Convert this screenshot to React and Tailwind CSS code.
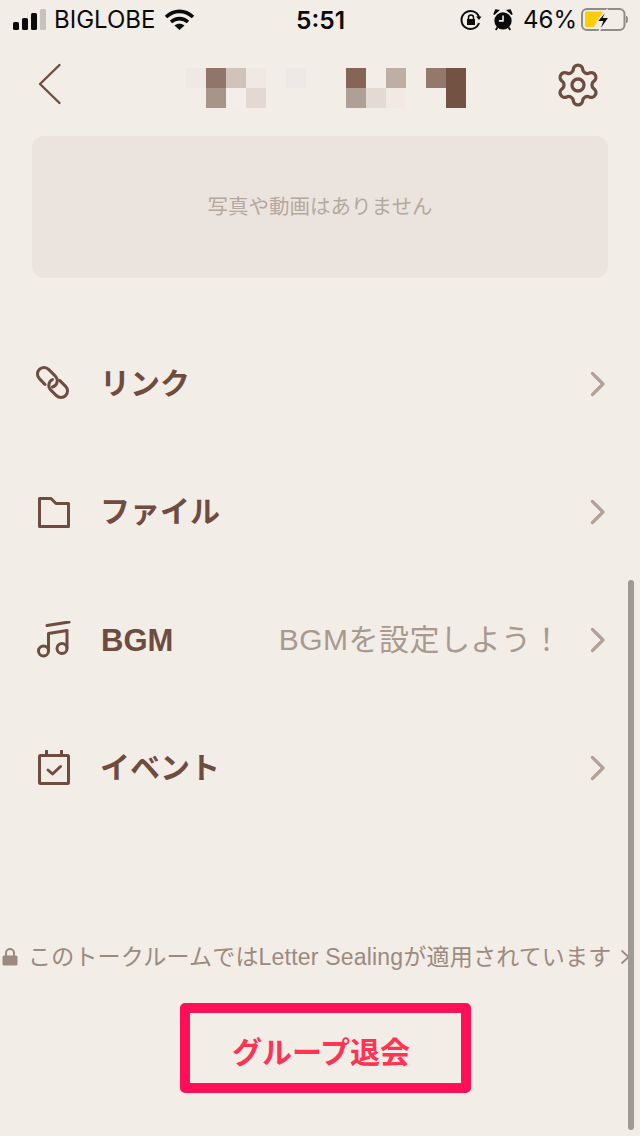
const JP = { fontFamily: '"Liberation Sans","Noto Sans CJK JP",sans-serif' };
const STATUS = { fontFamily: '"Inter","Liberation Sans",sans-serif' };

const MOSAIC = [
  ["#efe9e3","#90756a","#cfc3ba","#f0e8e2",null,"#efe9e5",null,null,"#846557","#f3ede8","#bfaea3",null,"#94786b","#745243"],
  [null,"#a89488","#f3eee9","#e2dad2",null,null,null,null,"#b09f94","#e3dad4","#f2e9e3",null,null,"#745243"],
];

function Chevron({ className = "" }) {
  return (
    <svg width="16" height="26" viewBox="0 0 16 26" fill="none" className={className}>
      <path d="M2.5 2.5 13 13 2.5 23.5" stroke="#b3a097" strokeWidth="3.2" strokeLinecap="round" strokeLinejoin="round" />
    </svg>
  );
}

function LinkIcon() {
  return (
    <svg width="36" height="36" viewBox="0 0 36 36" fill="none" stroke="#6e4c3f" strokeWidth="3" strokeLinecap="round" strokeLinejoin="round">
      <path d="M9 18.500 3.400 12.600A6.500 6.500 0 0 1 12.600 3.400L19.600 10.400A6.500 6.500 0 0 1 16.500 21" />
      <path d="M23.600 14.400 29.600 20.400A6.500 6.500 0 0 1 20.400 29.600L14.400 23.600A6.500 6.500 0 0 1 16.500 13.500" />
    </svg>
  );
}
function FolderIcon() {
  return (
    <svg width="36" height="36" viewBox="0 0 36 36" fill="none" stroke="#6e4c3f" strokeWidth="3" strokeLinejoin="round">
      <path d="M3.5 4.5H15L20 9.5H32.5V32.5H3.5Z" />
    </svg>
  );
}
function MusicIcon() {
  return (
    <svg width="36" height="38" viewBox="0 0 36 38" fill="none" stroke="#6e4c3f" strokeWidth="3" strokeLinecap="round" strokeLinejoin="round">
      <path d="M11 4.5 33 1" />
      <path d="M12.5 29V12.5L31 9.5V27" />
      <circle cx="7.5" cy="30" r="5" />
      <circle cx="26" cy="27.5" r="5" />
    </svg>
  );
}
function CalendarIcon() {
  return (
    <svg width="36" height="36" viewBox="0 0 36 36" fill="none" stroke="#6e4c3f" strokeWidth="3" strokeLinecap="round" strokeLinejoin="round">
      <rect x="3.5" y="5.5" width="29" height="28" rx="1" />
      <path d="M10.5 1V5M25.5 1V5" />
      <path d="M12 20 16.5 24 24.5 16.5" />
    </svg>
  );
}

function Row({ icon, label, right, labelClass = "text-[30px]" }) {
  return (
    <div className="h-[128px] flex items-center pl-[36px] pr-[34px]">
      <div className="w-[64px] shrink-0 flex items-center">{icon}</div>
      <span className={`${labelClass} font-bold text-[#6e4c3f] leading-none`}>{label}</span>
      <span className="ml-auto mr-[28px] text-[30px] tracking-[0.5px] text-[#a89a90] leading-none">{right}</span>
      <Chevron />
    </div>
  );
}

function StatusBar() {
  return (
    <div style={STATUS} className="h-[40px] relative flex items-center justify-between pl-[13px] pr-[12px] text-[#0b0b0b]">
      <div className="flex items-center">
        <svg width="33" height="22" viewBox="0 0 33 22" className="mr-[9px]">
          <rect x="0" y="13" width="6" height="8" rx="1.5" fill="#0b0b0b" />
          <rect x="9" y="9" width="6" height="12" rx="1.5" fill="#0b0b0b" />
          <rect x="18" y="4" width="6" height="17" rx="1.5" fill="#0b0b0b" />
          <rect x="27" y="0" width="6" height="21" rx="1.5" fill="#c6c3bd" />
        </svg>
        <span className="text-[24px] leading-none -ml-[1px]">BIGLOBE</span>
        <svg width="31" height="22" viewBox="0 0 31 22" className="ml-[9px]" fill="none" stroke="#0b0b0b" strokeWidth="3.6">
          <path d="M2 8C10 .5 21 .5 29 8" />
          <path d="M7 13C12 8.500 19 8.500 24 13" />
          <path d="M15.500 21 10.500 16.500C13.500 14 17.500 14 20.500 16.500Z" fill="#0b0b0b" stroke="none" />
        </svg>
      </div>
      <span className="absolute left-[296px] text-[24.500px] font-semibold leading-none">5:51</span>
      <div className="flex items-center">
        <svg width="22" height="22" viewBox="0 0 22 22" fill="none" stroke="#0b0b0b" strokeWidth="2">
          <path d="M19 14A9 9 0 1 1 19 8" />
          <path d="M21.500 7.500 19 11 16 7.500Z" fill="#0b0b0b" stroke="none" />
          <rect x="7" y="10" width="8" height="6" fill="#0b0b0b" stroke="none" />
          <path d="M8.500 10V8.500A2.500 2.500 0 0 1 13.500 8.500V10" strokeWidth="1.500" />
        </svg>
        <svg width="20" height="22" viewBox="0 0 22 24" className="ml-[11px]">
          <circle cx="11" cy="13" r="9.500" fill="#0b0b0b" />
          <path d="M11 7V13H6.500" stroke="#f2ede7" strokeWidth="1.800" fill="none" />
          <path d="M1 6 6 1.500 3 1ZM21 6 16 1.500 19 1Z" fill="#0b0b0b" stroke="#0b0b0b" strokeWidth="1.500" />
          <path d="M5 20 3 23M17 20 19 23" stroke="#0b0b0b" strokeWidth="2" />
        </svg>
        <span className="text-[24px] leading-none ml-[10px]">46%</span>
        <svg width="47" height="24" viewBox="0 0 47 24" className="ml-[4px]" fill="none">
          <rect x="1" y="1" width="42.500" height="21" rx="5" stroke="#8f8c86" strokeWidth="2" />
          <path d="M45.500 8C46.800 9 46.800 14 45.500 15Z" fill="#8f8c86" stroke="#8f8c86" />
          <path d="M4 5C4 4 5 3.500 6 3.500H22L13 19H6C5 19 4 18.500 4 17.500Z" fill="#fbcd09" />
          <path d="M26.500 1 16 13.500H21.500L18 23.500 28 9.500H22.500Z" fill="#0b0b0b" stroke="#f2ede7" strokeWidth="1.200" />
        </svg>
      </div>
    </div>
  );
}

export default function App() {
  return (
    <div style={JP} className="relative w-[640px] h-[1136px] overflow-hidden bg-[#f2ede7] flex flex-col">
      <StatusBar />

      <div className="h-[96px] relative flex items-center justify-between pl-[38px] pr-[40px]">
        <svg width="24" height="42" viewBox="0 0 24 42" fill="none" className="-mt-[9px]">
          <path d="M21.500 2 2 21 21.500 40" stroke="#6e4c3f" strokeWidth="2.400" strokeLinecap="round" strokeLinejoin="round" />
        </svg>
        <div className="absolute left-[186px] top-[28px] grid grid-cols-[repeat(14,20px)] grid-rows-[20px_20px]">
          {MOSAIC.flat().map((c, i) => (
            <div key={i} style={c ? { backgroundColor: c } : undefined} />
          ))}
        </div>
        <svg width="48" height="48" viewBox="0 0 24 24" fill="none" stroke="#6e4c3f" strokeWidth="1.650" strokeLinecap="round" strokeLinejoin="round" className="-mt-[7px] -mr-[2px]">
          <path d="M9.671 4.136a2.34 2.34 0 0 1 4.659 0 2.34 2.34 0 0 0 3.319 1.915 2.34 2.34 0 0 1 2.33 4.033 2.34 2.34 0 0 0 0 3.831 2.34 2.34 0 0 1-2.33 4.033 2.34 2.34 0 0 0-3.319 1.915 2.34 2.34 0 0 1-4.659 0 2.34 2.34 0 0 0-3.32-1.915 2.34 2.34 0 0 1-2.33-4.033 2.34 2.34 0 0 0 0-3.831A2.34 2.34 0 0 1 6.35 6.051a2.34 2.34 0 0 0 3.319-1.915" />
          <circle cx="12" cy="12" r="3" />
        </svg>
      </div>

      <div className="mx-[32px] h-[142px] rounded-[12px] bg-[#ebe4de] flex items-center justify-center">
        <span className="text-[20.500px] text-[#b5a99f] leading-none pt-[1px]">写真や動画はありません</span>
      </div>

      <div className="mt-[42px]">
        <Row icon={<LinkIcon />} label="リンク" />
        <Row icon={<FolderIcon />} label="ファイル" />
        <Row icon={<MusicIcon />} label="BGM" labelClass="text-[31px] ml-[1px]" right="BGMを設定しよう！" />
        <Row icon={<CalendarIcon />} label="イベント" />
      </div>

      <div className="mt-[109px] h-[32px] flex items-center pl-[2px] text-[#9c8a80]">
        <svg width="16" height="18" viewBox="0 0 16 18" className="shrink-0">
          <path d="M4 8V5A4 4 0 0 1 12 5V8" fill="none" stroke="#9c8a80" strokeWidth="2" />
          <rect x="0.500" y="7.500" width="15" height="10" rx="1.500" fill="#9c8a80" />
        </svg>
        <span className="ml-[10px] text-[23px] tracking-[0.2px] leading-none whitespace-nowrap">このトークルームではLetter Sealingが適用されています</span>
        <svg width="10" height="16" viewBox="0 0 10 16" className="ml-[9px] shrink-0" fill="none">
          <path d="M1.500 1.500 8.500 8 1.500 14.500" stroke="#9c8a80" strokeWidth="1.800" />
        </svg>
      </div>

      <div className="mt-[30px] ml-[180px] w-[291px] h-[90px] box-border border-[10px] border-[#ff0f56] rounded-[5px] flex items-center justify-center pr-[9px] pt-[10px]">
        <span className="text-[30px] font-bold text-[#ff3352] leading-none">グループ退会</span>
      </div>

      <div className="absolute left-[628px] top-[580px] w-[6px] h-[550px] rounded-full bg-[#9e9a94]" />
    </div>
  );
}
